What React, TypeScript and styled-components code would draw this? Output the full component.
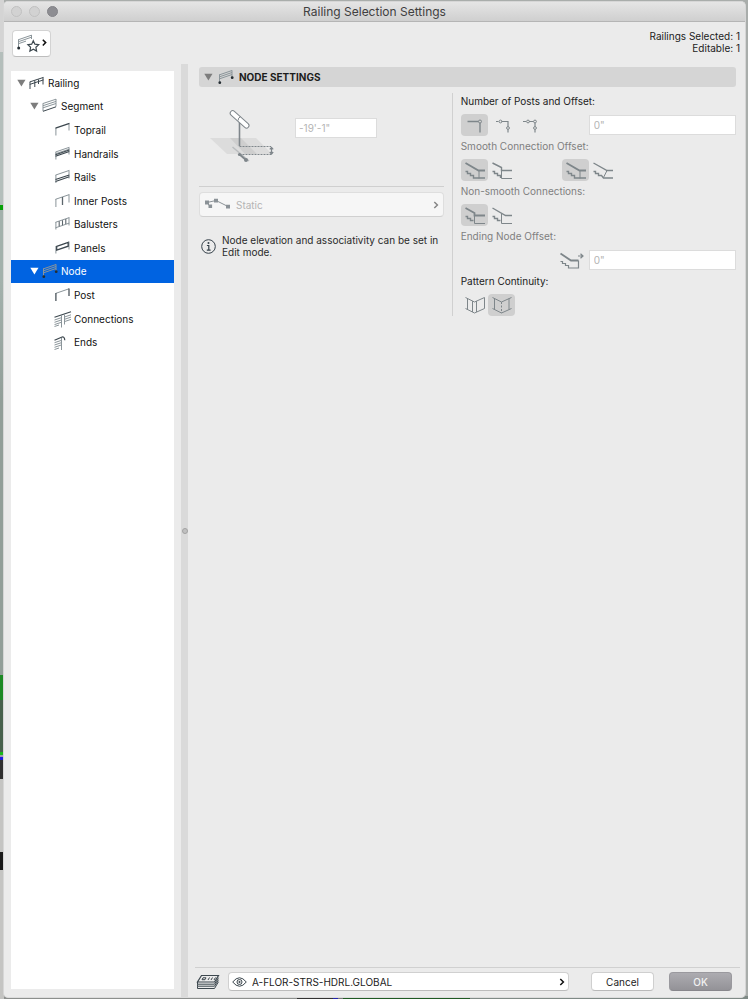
import React, { useState } from "react";
import styled, { createGlobalStyle, css } from "styled-components";

const GlobalStyle = createGlobalStyle`
  *, *::before, *::after { box-sizing: border-box; }
  body { margin: 0; background: #c9cccb; }
  body, button, input, select {
    font-family: Inter, "Liberation Sans", sans-serif;
    font-size: 10px;
    line-height: 12px;
    color: #1c1c1c;
  }
  button, input, select { margin: 0; padding: 0; }
  svg { display: block; flex: none; }
`;

/* ---------- window frame ---------- */

const Desktop = styled.div`
  min-height: 100vh;
  display: flex;
  padding: 1px 2px 1px 3px;
  background:
    linear-gradient(
        #d4d4d4 0 52px, #b4bebb 52px 205px, #08a008 205px 210px, #a3b1ac 210px 280px,
        #929f99 400px 675px, #1d8a25 675px 700px, #47614c 700px 752px, #18b818 752px 755px,
        #9a9aa8 755px 757px, #1d18e0 757px 760px, #303030 760px 779px, #c4c4c2 779px 852px,
        #1a1a1a 852px 870px, #c4c4c2 870px
      )
      left top / 4px 100% no-repeat,
    linear-gradient(
        90deg, #8c8f8d 0 297px, #333333 297px 333px, #2222b0 333px 338px,
        #777777 338px 343px, #1f5a24 343px 470px, #7f8a86 470px
      )
      left bottom / 100% 3px no-repeat,
    #a9adab;
`;

const Window = styled.main`
  flex: 1;
  min-width: 0;
  display: flex;
  flex-direction: column;
  background: #ebebeb;
  border: 1px solid #d6d6d6;
  border-bottom-color: #dcdcdc;
  border-radius: 5px;
  overflow: hidden;
`;

const TitleBar = styled.header`
  height: 20px;
  flex: none;
  display: grid;
  grid-template-columns: 1fr auto 1fr;
  align-items: center;
  padding: 0 7px;
  background: linear-gradient(#e5e5e5, #cfcfcf);
  border-bottom: 1px solid #b5b5b5;
`;

const Title = styled.h1`
  margin: 0;
  font-size: 12px;
  line-height: 14px;
  font-weight: 400;
  color: #404040;
`;

const Lights = styled.div`
  display: flex;
  gap: 7px;
`;

const Light = styled.button<{ $on?: boolean }>`
  width: 11px;
  height: 11px;
  border-radius: 50%;
  border: 1px solid ${(p) => (p.$on ? "#838388" : "#c0c0c0")};
  background: ${(p) => (p.$on ? "#8d8d92" : "#d2d2d2")};
`;

const Toolbar = styled.div`
  height: 42px;
  flex: none;
  display: flex;
  justify-content: space-between;
  align-items: center;
  padding: 0 5px 0 8px;
`;

const FavoriteButton = styled.button`
  width: 39px;
  height: 27px;
  display: flex;
  align-items: center;
  justify-content: center;
  background: #fff;
  border: 1px solid #d3d3d3;
  border-bottom-color: #bdbdbd;
  border-radius: 4px;
`;

const Summary = styled.p`
  margin: 0;
  padding-bottom: 2px;
  text-align: right;
`;

const Body = styled.div`
  flex: 1;
  min-height: 0;
  display: flex;
`;

/* ---------- tree ---------- */

const Sidebar = styled.nav`
  width: 177px;
  flex: none;
  display: flex;
  padding: 7px 7px 8px;
`;

const Tree = styled.div`
  flex: 1;
  background: #fff;
`;

const TreeRows = styled.ul`
  margin: 0;
  padding: 0;
  list-style: none;
  display: grid;
  grid-auto-rows: 1fr;
  min-height: 283px;
`;

const TreeItem = styled.li`
  display: flex;
`;

const TreeRow = styled.button<{ $level: number; $selected: boolean }>`
  flex: 1;
  display: flex;
  align-items: center;
  gap: 3px;
  border: 0;
  text-align: left;
  padding-left: ${(p) => [6, 19, 44][p.$level]}px;
  background: ${(p) => (p.$selected ? "#0063e1" : "transparent")};
  color: ${(p) => (p.$selected ? "#fff" : "#111")};
`;

const Splitter = styled.div`
  width: 7px;
  flex: none;
  display: flex;
  align-items: center;
  justify-content: center;
  background: #dadada;
`;

const Grip = styled.span`
  width: 6px;
  height: 6px;
  border-radius: 50%;
  border: 1px solid #a2a2a2;
  background: #c0c0c0;
`;

/* ---------- settings ---------- */

const Content = styled.section`
  flex: 1;
  min-width: 0;
  display: flex;
  flex-direction: column;
`;

const Panel = styled.div`
  flex: 1;
  padding: 3px 9px 0 11px;
`;

const PanelHeading = styled.h2`
  margin: 0;
  font-size: 10px;
  line-height: 12px;
`;

const PanelToggle = styled.button`
  width: 100%;
  height: 20px;
  display: flex;
  align-items: center;
  gap: 5px;
  padding: 0 5px;
  border: 0;
  border-radius: 3px;
  background: #d5d5d5;
  font-size: 10px;
  font-weight: 700;
`;

const Columns = styled.div`
  display: grid;
  grid-template-columns: minmax(0, 8fr) minmax(0, 9fr);
  padding-top: 6px;
`;

const LeftColumn = styled.div`
  padding: 14px 8px 0 0;
`;

const RightColumn = styled.div`
  display: grid;
  grid-template-columns: minmax(0, 1fr);
  align-content: start;
  gap: 2px;
  padding-left: 8px;
  border-left: 1px solid #d0d0d0;
`;

const Elevation = styled.div`
  display: flex;
  align-items: flex-start;
  gap: 19px;
  height: 80px;
  padding-left: 11px;
  border-bottom: 1px solid #cfcfcf;
`;

const Field = styled.input`
  height: 20px;
  padding: 0 4px;
  background: #fff;
  border: 1px solid #dcdcdc;
  &:disabled { color: #b4b4b4; }
`;

const ElevationField = styled(Field)`
  width: 82px;
  margin-top: 11px;
  padding: 0 3px;
`;

const SelectBox = styled.div<{ $muted?: boolean }>`
  display: flex;
  align-items: center;
  border: 1px solid ${(p) => (p.$muted ? "#dedede" : "#d0d0d0")};
  border-bottom-color: ${(p) => (p.$muted ? "#d0d0d0" : "#bcbcbc")};
  border-radius: 4px;
  ${(p) =>
    p.$muted
      ? css`
          height: 25px;
          gap: 5px;
          margin-top: 5px;
          padding: 0 4px;
          background: #f6f6f6;
        `
      : css`
          flex: 1;
          min-width: 0;
          height: 19px;
          gap: 5px;
          padding: 0 3px;
          background: #fff;
        `}
`;

const Select = styled.select`
  flex: 1;
  min-width: 0;
  appearance: none;
  border: 0;
  background: transparent;
  outline: none;
  &:disabled { color: #b4b4b4; opacity: 1; }
`;

const Info = styled.p`
  display: flex;
  align-items: center;
  gap: 6px;
  margin: 17px 0 0 2px;
  color: #2a2a2a;
`;

const Setting = styled.div`
  display: grid;
  grid-template-columns: minmax(0, 1fr);
  gap: 5px;
`;

const SettingLabel = styled.label<{ $muted?: boolean }>`
  line-height: 16px;
  color: ${(p) => (p.$muted ? "#7f7f7f" : "#222")};
`;

const Controls = styled.div`
  display: grid;
  grid-template-columns: 101px minmax(0, 1fr);
  align-items: center;
  height: 22px;
`;

const ButtonGroup = styled.div`
  display: flex;
`;

const ToggleButton = styled.button`
  width: 27px;
  height: 22px;
  flex: none;
  display: flex;
  align-items: center;
  justify-content: center;
  border: 0;
  border-radius: 4px;
  background: transparent;
  &[aria-pressed="true"] { background: #cfcfcf; }
`;

const OffsetSlot = styled.div`
  grid-column: 2;
  display: flex;
  align-items: center;
  padding-left: 27px;
`;

const EndingSlot = styled(OffsetSlot)`
  padding-left: 0;
  margin-left: -2px;
  gap: 5px;
`;

const OffsetField = styled(Field)`
  flex: 1;
  min-width: 0;
`;

/* ---------- footer ---------- */

const Footer = styled.footer`
  display: flex;
  align-items: center;
  height: 30px;
  margin: 0 5px 0 7px;
  padding: 0 8px 2px 1px;
  border-top: 1px solid #d0d0d0;
  gap: 8px;
`;

const FooterButtons = styled.div`
  display: flex;
  gap: 15px;
  padding-left: 14px;
`;

const PushButton = styled.button<{ $primary?: boolean }>`
  width: 63px;
  height: 19px;
  border-radius: 4px;
  border: 1px solid ${(p) => (p.$primary ? "#9a999e" : "#cfcfcf")};
  border-bottom-color: ${(p) => (p.$primary ? "#88878c" : "#b9b9b9")};
  background: ${(p) => (p.$primary ? "linear-gradient(#adacb1, #939297)" : "#fff")};
  color: ${(p) => (p.$primary ? "#f2f2f2" : "#222")};
  font-weight: ${(p) => (p.$primary ? 500 : 400)};
`;

/* ---------- icons ---------- */

const DARK = "#3c474e";
const MID = "#8b959a";

type ShapeProps = { children: React.ReactNode; w?: number; h?: number; stroke?: string };

const Shape = ({ children, w = 16, h = 16, stroke = DARK }: ShapeProps) => (
  <svg width={w} height={h} viewBox={`0 0 ${w} ${h}`} fill="none" stroke={stroke} overflow="visible" aria-hidden="true">
    {children}
  </svg>
);

const Triangle = ({ color = "#7d7d7d" }: { color?: string }) => (
  <svg width="9" height="8" viewBox="0 0 9 8" aria-hidden="true">
    <path d="M.3.7h8.2L4.4 7.5z" fill={color} />
  </svg>
);

const Chevron = ({ color = "#111" }: { color?: string }) => (
  <Shape w={6} h={8} stroke={color}>
    <path d="M1.3 1 4.4 4 1.3 7" strokeWidth="1.5" />
  </Shape>
);

const NodeGlyph = () => (
  <Shape>
    <path d="M1.5 5.8 14 1.5M1.5 7.8 14 3.5M1.5 9.8 14 5.5M1.5 5.3v7.5M14 1.3v7.5" stroke={MID} />
    <circle cx="1.8" cy="13.7" r="1.4" fill="#252d32" stroke="none" />
    <circle cx="14.2" cy="8.7" r="1.4" fill="#252d32" stroke="none" />
  </Shape>
);

const glyphs: Record<string, React.ReactNode> = {
  Railing: (
    <Shape>
      <path d="M.8 6.900 14.500 2.400M.8 9.400 14.500 4.900" />
      <path d="M1 6.800v7.200M5.800 5.500v6.500M9.500 4.500v4.500M14 2.500v7" />
    </Shape>
  ),
  Segment: (
    <Shape>
      <path d="M1 5.500 14 1.200M1 7.700 14 3.400M1 9.800 14 5.500M1 5.200v8M14 1v7.500" stroke={MID} />
      <path d="M1 13.300 14 8.800" />
    </Shape>
  ),
  Toprail: (
    <Shape>
      <path d="M.9 6v7.500M14 2v6.500" stroke={MID} />
      <path d="M.5 6.200 14.500 1.400" strokeWidth="1.300" />
    </Shape>
  ),
  Handrails: (
    <Shape>
      <path d="M.9 6v7.500M14 1.500v7M.5 6 14.300 1.300M.5 7.800 14.300 3.100" stroke={MID} />
      <path d="M.5 8.700 14.300 4M.5 10.200 14.300 5.500" strokeWidth="1.100" />
    </Shape>
  ),
  Rails: (
    <Shape>
      <path d="M.9 6v8M14 1.500v8M.5 6.100 14.300 1.400" stroke={MID} />
      <path d="M.5 10.600 14.300 5.900M.5 12.400 14.300 7.700" strokeWidth="1.100" />
    </Shape>
  ),
  "Inner Posts": (
    <Shape>
      <path d="M.9 6v8M14 1.500v8M.5 6.300 14.300 1.600" stroke={MID} />
      <path d="M7.500 4v8" stroke="#5c666c" strokeWidth="1.300" />
    </Shape>
  ),
  Balusters: (
    <Shape>
      <path d="M.5 6.300 14.300 1.600M.5 11.800 14.300 7.100M.9 6v7.500M14 1.500v8" stroke={MID} />
      <path d="M4.200 5.300v5M7.500 4.200v5M10.800 3v5" stroke="#5c666c" strokeWidth="1.100" />
    </Shape>
  ),
  Panels: (
    <Shape>
      <path d="M.9 6v7.500M14 1.500v8" stroke={MID} />
      <path d="M1.700 6.400 13.200 2.400v3.800L1.700 10.200z" strokeWidth="1.300" />
    </Shape>
  ),
  Node: <NodeGlyph />,
  Post: (
    <Shape>
      <path d="M.9 6.300 14 1.800" stroke={MID} />
      <path d="M.9 6v8M14 1.500v7.500" strokeWidth="1.200" />
    </Shape>
  ),
  Connections: (
    <Shape>
      <path d="M-.5 6.200 16 .8" strokeWidth="1.200" />
      <path d="M-.5 9 6 6.800M-.5 11.300 6 9.100M-.5 13.600 6 11.400M-.5 15.500 4 14M9.500 6 16 3.800M9.500 8.300 16 6.100M9.500 10.600 16 8.400M6.500 4v12.500M9.500 3.500V13.500" stroke={MID} />
    </Shape>
  ),
  Ends: (
    <Shape>
      <path d="M-.5 6.200 6.500 3.200Q9.500 2 9.800 6.200" strokeWidth="1.200" />
      <path d="M-.5 8.700 6 6.500M-.5 11 6 8.800M-.5 13.300 6 11.100M-.5 15.500 4 14M6.500 4v12" stroke={MID} />
    </Shape>
  ),
};

const FavoriteGlyph = () => (
  <Shape w={30} h={20}>
    <path d="M1.500 6.700 14.500 2.200M1.500 8.700 14.500 4.200M1.500 10.700 9 8.100M1.500 6.300v8M14.500 2v4" stroke={MID} />
    <circle cx="1.700" cy="15" r="1.500" fill="#222b31" stroke="none" />
    <path d="m16.300 7.700 1.600 3.500 3.800.5-2.800 2.600.7 3.800-3.300-1.900-3.400 1.900.7-3.800-2.700-2.600 3.800-.5z" strokeWidth="1.200" fill="#fff" />
    <path d="m25.800 6.700 2.900 2.900-2.900 2.900" stroke="#111" strokeWidth="1.500" />
  </Shape>
);

const ElevationGlyph = () => (
  <svg width="66" height="60" viewBox="0 0 66 60" fill="none" stroke="#7f868b" aria-hidden="true">
    <path d="M0 31h46l16 16H17z" fill="#dcdcdc" stroke="none" />
    <path d="M20 31h11l16 16H35z" fill="#cecece" stroke="none" />
    <path d="M22.5 40 39 54" stroke="#b9bcbe" strokeWidth="1.4" />
    <path d="M29.5 14v25" strokeWidth="1.6" />
    <rect x="-2.2" y="-2.500" width="23.500" height="5" rx="2.500" transform="translate(22.5 6) rotate(42)" fill="#fff" />
    <path d="M30.500 9.700q-2.500 1-2.400 3.800" />
    <path d="M29.5 39.5H61M29.5 47.5H61" strokeDasharray="2 1" />
    <path d="M61.5 41v6M59.8 42.4l1.7-2 1.7 2M59.8 45l1.7 2 1.7-2" strokeWidth="1.2" />
    <path d="m29 47 7 6" strokeWidth="1.8" />
    <circle cx="29.5" cy="47.5" r="1.6" fill="#7f868b" stroke="none" />
    <circle cx="36" cy="53" r="2" fill="#7f868b" stroke="none" />
  </svg>
);

const StaticGlyph = () => (
  <Shape w={27} h={14} stroke="#8b9297">
    <path d="m3 4.500 9-2 12 6M3 4.500l3 4" />
    <path d="M1 2.500h4v4H1zM10 .8h4v3.600h-4zM4.500 6.500h3.600v3.600H4.500zM22 6.800h4v3.600h-4z" fill="#8b9297" stroke="none" />
  </Shape>
);

const InfoGlyph = () => (
  <Shape w={15} h={15} stroke="#344049">
    <circle cx="7.5" cy="7.5" r="6.8" />
    <path d="M5.900 6.500h1.900v4.500M5.800 11.200h3.800" strokeWidth="1.2" />
    <circle cx="7.500" cy="4" r="1" fill="#344049" stroke="none" />
  </Shape>
);

const GRAY = "#7e868a";

const PostGlyph = ({ kind }: { kind: 1 | 2 | 3 }) => (
  <Shape w={19} h={16} stroke={GRAY}>
    {kind === 1 && (
      <>
        <path d="M2.500 4.500h11M15 6v9.500" strokeWidth="1.400" />
        <circle cx="15" cy="4.500" r="1.500" />
      </>
    )}
    {kind === 2 && (
      <>
        <path d="M4 4.500h2.500M9.500 4.500H16v5M16 12.500V15.500" strokeWidth="1.200" />
        <circle cx="8.500" cy="4.500" r="1.400" />
        <circle cx="16" cy="11" r="1.400" />
      </>
    )}
    {kind === 3 && (
      <>
        <path d="M4 4.500h3M10 4.500h4.500M16 6v3.500M16 12.500V15.500" strokeWidth="1.200" />
        <circle cx="9" cy="4.500" r="1.400" />
        <circle cx="16" cy="4.500" r="1.400" />
        <circle cx="16" cy="11" r="1.400" />
      </>
    )}
  </Shape>
);

const stairPaths = {
  post: ["M.5 2 13.500 9.500H20", "M.5 10.500h2v2h3v2h3v2.500H20", "M14 9.500v8"],
  step: ["M.5 2 9.500 6.500V9.500H20", "M.5 10.500h2v2h3v2h3v2.500", "M9.500 9.500v8H20"],
  angled: ["M.5 2 14 9.500H20", "M.5 10.500h2v2h3v2h3l2 2.500H20", "M14 9.500l-3.500 7"],
  offset: ["M.5 2 9.500 7v2.500H20", "M.5 10.500h2v2h3v2h3", "M9.500 9.500v8H20"],
  straight: ["M.5 2 13.500 9.500H20", "M.5 10.500h2v2h3v2h3", "M9.500 7.500v10H20"],
};

const StairGlyph = ({ kind, bold }: { kind: keyof typeof stairPaths; bold?: boolean }) => (
  <Shape w={19} h={19} stroke={GRAY}>
    <path d={stairPaths[kind][0]} strokeWidth={bold ? 1.8 : 1.4} />
    <path d={stairPaths[kind][1]} strokeWidth="1.400" />
    <path d={stairPaths[kind][2]} />
  </Shape>
);

const EndingGlyph = () => (
  <Shape w={24} h={19} stroke={GRAY}>
    <path d="M.5 2.500 11 9.500h7.500" strokeWidth="1.800" />
    <path d="M.5 10.500h2v2h3v2h3v2.500h10V9.500" strokeWidth="1.200" />
    <path d="M18 5h5M20.500 2.800 23 5l-2.500 2.200" strokeWidth="1.200" />
  </Shape>
);

const PatternGlyph = ({ joined }: { joined?: boolean }) => (
  <Shape w={19} h={18} stroke={GRAY}>
    <path d="M.5 1.500 9.500 6l10-4.500M.5 12.500l9 4.500 10-4.500M2.500 2.500v11" />
    {joined ? (
      <>
        <path d="M17 2.500v11" />
        <path d="M9.500 6v11" strokeDasharray="2 1.500" />
      </>
    ) : (
      <path d="M7.500 5v11M11.500 5v11M19.500 1.500v11" />
    )}
  </Shape>
);

const LayersGlyph = () => (
  <Shape w={24} h={16}>
    <path d="M5.500 1.500h17L18.500 8H1.500z" fill="#ebebeb" strokeWidth="1.200" />
    <path d="M1.500 8v2.200h17l4-6.500M1.500 10.200v2h17l4-6.500M1.500 12.200v2.300h17l4-6.800" />
    <path d="M7 3.800h3L9 5.700H6zM13.500 3.500l-1.500 2.500M16.500 3.500 15 6M19.500 3.500 18 6" />
  </Shape>
);

const EyeGlyph = () => (
  <Shape w={15} h={12}>
    <path d="M.7 6Q7.500-2.500 14.300 6 7.500 14.500.7 6z" />
    <circle cx="7.500" cy="6" r="2.500" />
    <circle cx="7.500" cy="6" r=".7" fill={DARK} />
  </Shape>
);

/* ---------- data ---------- */

const treeItems: { name: string; level: number }[] = [
  { name: "Railing", level: 0 },
  { name: "Segment", level: 1 },
  { name: "Toprail", level: 2 },
  { name: "Handrails", level: 2 },
  { name: "Rails", level: 2 },
  { name: "Inner Posts", level: 2 },
  { name: "Balusters", level: 2 },
  { name: "Panels", level: 2 },
  { name: "Node", level: 1 },
  { name: "Post", level: 2 },
  { name: "Connections", level: 2 },
  { name: "Ends", level: 2 },
];

type Option = { label: string; icon: React.ReactNode; on?: boolean };

const Choices = ({ label, options }: { label: string; options: Option[] }) => (
  <ButtonGroup role="group" aria-label={label}>
    {options.map((o) => (
      <ToggleButton key={o.label} type="button" aria-label={o.label} aria-pressed={!!o.on}>
        {o.icon}
      </ToggleButton>
    ))}
  </ButtonGroup>
);

export default function App() {
  const [selected, setSelected] = useState("Node");

  return (
    <>
      <GlobalStyle />
      <Desktop>
        <Window>
          <TitleBar>
            <Lights>
              <Light type="button" aria-label="Close" />
              <Light type="button" aria-label="Minimize" />
              <Light type="button" aria-label="Zoom" $on />
            </Lights>
            <Title>Railing Selection Settings</Title>
          </TitleBar>
          <Toolbar>
            <FavoriteButton type="button" aria-label="Favorites">
              <FavoriteGlyph />
            </FavoriteButton>
            <Summary>
              Railings Selected: 1<br />
              Editable: 1
            </Summary>
          </Toolbar>
          <Body>
            <Sidebar aria-label="Railing parts">
              <Tree>
                <TreeRows>
                  {treeItems.map(({ name, level }) => (
                    <TreeItem key={name}>
                      <TreeRow
                        type="button"
                        $level={level}
                        $selected={name === selected}
                        onClick={() => setSelected(name)}
                      >
                        {level < 2 && <Triangle color={name === selected ? "#fff" : undefined} />}
                        {glyphs[name]}
                        {name}
                      </TreeRow>
                    </TreeItem>
                  ))}
                </TreeRows>
              </Tree>
            </Sidebar>
            <Splitter>
              <Grip />
            </Splitter>
            <Content>
              <Panel>
                <PanelHeading>
                  <PanelToggle type="button" aria-expanded="true">
                    <Triangle />
                    <NodeGlyph />
                    NODE SETTINGS
                  </PanelToggle>
                </PanelHeading>
                <Columns>
                  <LeftColumn>
                    <Elevation>
                      <ElevationGlyph />
                      <ElevationField aria-label="Node elevation" defaultValue={`-19'-1"`} disabled />
                    </Elevation>
                    <SelectBox $muted>
                      <StaticGlyph />
                      <Select aria-label="Associativity" disabled>
                        <option>Static</option>
                      </Select>
                      <Chevron color="#858585" />
                    </SelectBox>
                    <Info>
                      <InfoGlyph />
                      <span>Node elevation and associativity can be set in Edit mode.</span>
                    </Info>
                  </LeftColumn>
                  <RightColumn>
                    <Setting>
                      <SettingLabel htmlFor="post-offset">Number of Posts and Offset:</SettingLabel>
                      <Controls>
                        <Choices
                          label="Number of posts"
                          options={[
                            { label: "One post", icon: <PostGlyph kind={1} />, on: true },
                            { label: "Two posts", icon: <PostGlyph kind={2} /> },
                            { label: "Three posts", icon: <PostGlyph kind={3} /> },
                          ]}
                        />
                        <OffsetSlot>
                          <OffsetField id="post-offset" defaultValue={`0"`} disabled />
                        </OffsetSlot>
                      </Controls>
                    </Setting>
                    <Setting>
                      <SettingLabel as="span" $muted>Smooth Connection Offset:</SettingLabel>
                      <Controls>
                        <Choices
                          label="Upper connection"
                          options={[
                            { label: "At node", icon: <StairGlyph kind="post" bold />, on: true },
                            { label: "Stepped", icon: <StairGlyph kind="step" /> },
                          ]}
                        />
                        <Choices
                          label="Lower connection"
                          options={[
                            { label: "Vertical", icon: <StairGlyph kind="post" bold />, on: true },
                            { label: "Bisector", icon: <StairGlyph kind="angled" /> },
                          ]}
                        />
                      </Controls>
                    </Setting>
                    <Setting>
                      <SettingLabel as="span" $muted>Non-smooth Connections:</SettingLabel>
                      <Controls>
                        <Choices
                          label="Non-smooth connections"
                          options={[
                            { label: "Vertical step", icon: <StairGlyph kind="offset" bold />, on: true },
                            { label: "Direct", icon: <StairGlyph kind="straight" /> },
                          ]}
                        />
                      </Controls>
                    </Setting>
                    <Setting>
                      <SettingLabel htmlFor="ending-offset" $muted>Ending Node Offset:</SettingLabel>
                      <Controls>
                        <EndingSlot>
                          <EndingGlyph />
                          <OffsetField id="ending-offset" defaultValue={`0"`} disabled />
                        </EndingSlot>
                      </Controls>
                    </Setting>
                    <Setting>
                      <SettingLabel as="span">Pattern Continuity:</SettingLabel>
                      <Controls>
                        <Choices
                          label="Pattern continuity"
                          options={[
                            { label: "Restart at node", icon: <PatternGlyph /> },
                            { label: "Continue through node", icon: <PatternGlyph joined />, on: true },
                          ]}
                        />
                      </Controls>
                    </Setting>
                  </RightColumn>
                </Columns>
              </Panel>
              <Footer>
                <LayersGlyph />
                <SelectBox>
                  <EyeGlyph />
                  <Select aria-label="Layer">
                    <option>A-FLOR-STRS-HDRL.GLOBAL</option>
                  </Select>
                  <Chevron />
                </SelectBox>
                <FooterButtons>
                  <PushButton type="button">Cancel</PushButton>
                  <PushButton type="button" $primary>OK</PushButton>
                </FooterButtons>
              </Footer>
            </Content>
          </Body>
        </Window>
      </Desktop>
    </>
  );
}
